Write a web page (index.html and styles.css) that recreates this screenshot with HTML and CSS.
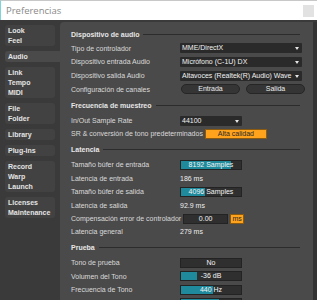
FILE: index.html
```html
<!DOCTYPE html>
<html lang="es">
<head>
  <meta charset="UTF-8">
  <title>Preferencias</title>
  <link rel="stylesheet" href="styles.css">
</head>
<body>
  <div class="window">
    <header class="titlebar">
      <span class="title">Preferencias</span>
      <span class="close"></span>
    </header>

    <div class="content">
      <nav class="tabs">
        <div class="tab">Look<br>Feel</div>
        <div class="tab active">Audio</div>
        <div class="tab">Link<br>Tempo<br>MIDI</div>
        <div class="tab">File<br>Folder</div>
        <div class="tab">Library</div>
        <div class="tab">Plug-ins</div>
        <div class="tab">Record<br>Warp<br>Launch</div>
        <div class="tab">Licenses<br>Maintenance</div>
      </nav>

      <main class="panel">
        <section class="group first">
          <div class="head"><span>Dispositivo de audio</span></div>
          <div class="row">
            <span class="label">Tipo de controlador</span>
            <div class="select wide">MME/DirectX</div>
          </div>
          <div class="row">
            <span class="label">Dispositivo entrada Audio</span>
            <div class="select wide">Micrófono (C-1U) DX</div>
          </div>
          <div class="row">
            <span class="label">Dispositivo salida Audio</span>
            <div class="select wide">Altavoces (Realtek(R) Audio) Wave</div>
          </div>
          <div class="row">
            <span class="label">Configuración de canales</span>
            <div class="pills">
              <div class="pill">Entrada</div>
              <div class="pill">Salida</div>
            </div>
          </div>
        </section>

        <section class="group">
          <div class="head"><span>Frecuencia de muestreo</span></div>
          <div class="row">
            <span class="label">In/Out Sample Rate</span>
            <div class="select">44100</div>
          </div>
          <div class="row">
            <span class="label">SR &amp; conversión de tono predeterminados</span>
            <div class="toggle on">Alta calidad</div>
          </div>
        </section>

        <section class="group">
          <div class="head"><span>Latencia</span></div>
          <div class="row">
            <span class="label">Tamaño búfer de entrada</span>
            <div class="field"><div class="fill" style="width: 84%"></div><span>8192 Samples</span></div>
          </div>
          <div class="row">
            <span class="label">Latencia de entrada</span>
            <span class="value">186 ms</span>
          </div>
          <div class="row">
            <span class="label">Tamaño búfer de salida</span>
            <div class="field"><div class="fill" style="width: 40%"></div><span>4096 Samples</span></div>
          </div>
          <div class="row">
            <span class="label">Latencia de salida</span>
            <span class="value">92.9 ms</span>
          </div>
          <div class="row">
            <span class="label">Compensación error de controlador</span>
            <div class="field short"><span>0.00</span></div>
            <div class="unit">ms</div>
          </div>
          <div class="row">
            <span class="label">Latencia general</span>
            <span class="value">279 ms</span>
          </div>
        </section>

        <section class="group">
          <div class="head"><span>Prueba</span></div>
          <div class="row">
            <span class="label">Tono de prueba</span>
            <div class="field"><span>No</span></div>
          </div>
          <div class="row">
            <span class="label">Volumen del Tono</span>
            <div class="field"><div class="fill" style="width: 27%"></div><span>-36 dB</span></div>
          </div>
          <div class="row">
            <span class="label">Frecuencia de Tono</span>
            <div class="field"><div class="fill" style="width: 53%"></div><span>440 Hz</span></div>
          </div>
          <div class="row">
            <span class="label"></span>
            <div class="field"><div class="fill" style="width: 64%"></div></div>
          </div>
        </section>
      </main>

      <div class="scrollbar"></div>
    </div>
  </div>
</body>
</html>
```

FILE: styles.css
```css
body {
  margin: 0;
  background-color: #3a3a3a;
  font-family: "Liberation Sans", Arial, sans-serif;
  font-size: 7px;
  color: #dcdcdc;
  overflow: hidden;
}

.window {
  width: 317px;
  height: 300px;
  display: flex;
  flex-direction: column;
  overflow: hidden;
}

/* === Title bar === */
.titlebar {
  height: 20px;
  flex: none;
  background-color: #ffffff;
  border-left: 1px solid #7fd4d8;
  border-top: 1px solid #c8c8c8;
  box-sizing: border-box;
  display: flex;
  align-items: center;
  justify-content: space-between;
  padding: 0 3px 0 5px;
}

.title {
  font-family: "Open Sans", "Liberation Sans", sans-serif;
  font-size: 9.5px;
  color: #8a8a8a;
}

.close {
  width: 11px;
  height: 12px;
  background-color: #e2e2e2;
}

/* === Content === */
.content {
  flex: 1;
  display: flex;
  min-height: 0;
}

.tabs {
  width: 60px;
  flex: none;
  display: flex;
  flex-direction: column;
  gap: 5px;
  padding-top: 5px;
  box-sizing: border-box;
}

.tab {
  margin-left: 5px;
  width: 50px;
  box-sizing: border-box;
  padding: 0.5px 3px;
  line-height: 10px;
  font-weight: bold;
  color: #e4e4e4;
  background-color: #424242;
  border-radius: 3px;
}

.tab.active {
  width: 55px;
  background-color: #4a4a4a;
  border-radius: 3px 0 0 3px;
}

.panel {
  flex: 1;
  margin-top: 2px;
  background-color: #4a4a4a;
  border-radius: 4px 0 0 0;
  padding: 5.3px 11px 0 11px;
  min-width: 0;
  overflow: hidden;
}

.scrollbar {
  width: 4px;
  flex: none;
  margin-top: 2px;
  background-color: #333333;
}

/* === Groups === */
.group {
  margin-top: 1px;
}

.group.first {
  margin-top: 0;
}

.head {
  height: 16.6px;
  display: flex;
  align-items: center;
  gap: 4px;
  margin-right: 2px;
  font-weight: bold;
  color: #e6e6e6;
}

.group.first .head {
  height: 14px;
}

.head::after {
  content: "";
  flex: 1;
  height: 1px;
  background-color: #2c2c2c;
}

.row {
  height: 13.4px;
  display: flex;
  align-items: center;
  gap: 2px;
  white-space: nowrap;
}

.group.first .row {
  height: 13.75px;
}

.label {
  min-width: 107px;
  color: #dadada;
}

.value {
  color: #eeeeee;
}

/* === Controls === */
.select {
  position: relative;
  width: 62px;
  height: 10px;
  box-sizing: border-box;
  background-color: #2a2a2a;
  border-radius: 1px;
  padding-left: 2px;
  line-height: 10px;
  color: #f2f2f2;
}

.select.wide {
  width: 126px;
}

.select::after {
  content: "";
  position: absolute;
  right: 3px;
  top: 4px;
  border-left: 2.5px solid transparent;
  border-right: 2.5px solid transparent;
  border-top: 3px solid #e6e6e6;
}

.pills {
  display: flex;
  gap: 6px;
  margin-left: 1px;
}

.pill {
  width: 59px;
  height: 10px;
  box-sizing: border-box;
  border: 1px solid #262626;
  border-radius: 5px;
  background-color: #353535;
  text-align: center;
  line-height: 8px;
  color: #ececec;
}

.toggle {
  width: 62px;
  height: 10px;
  box-sizing: border-box;
  border: 1px solid #8a5a10;
  text-align: center;
  line-height: 8px;
  color: #2a2a2a;
}

.toggle.on {
  background-color: #ffa21c;
}

.field {
  position: relative;
  width: 62px;
  height: 10px;
  box-sizing: border-box;
  border: 1px solid #232323;
  background-color: #2f2f2f;
  text-align: center;
  line-height: 8px;
  color: #f4f4f4;
}

.field.short {
  width: 45px;
}

.field .fill {
  position: absolute;
  left: 0;
  top: 0;
  bottom: 0;
  background-color: #1f8a9c;
}

.field span {
  position: relative;
}

.unit {
  width: 14px;
  height: 10px;
  box-sizing: border-box;
  border: 1px solid #8a5a10;
  background-color: #ffa21c;
  text-align: center;
  line-height: 8px;
  color: #2a2a2a;
}
```
